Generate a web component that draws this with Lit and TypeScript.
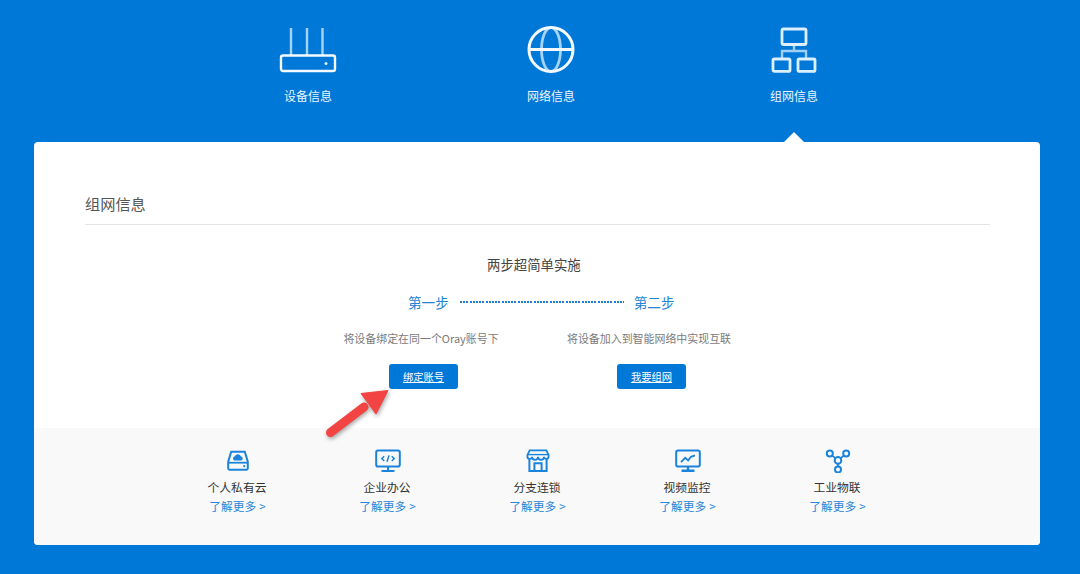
import { LitElement, html, css, svg } from "lit";
import { customElement } from "lit/decorators.js";

const B = "#1a84dc";

const icons = [
  svg`<path d="M6.200 2.800h13.600l3 9.800v6.600a1.600 1.600 0 0 1-1.600 1.600H4.800a1.600 1.600 0 0 1-1.600-1.600v-6.600z" fill="none" stroke="${B}" stroke-width="2"/>
      <path d="M3.500 13.700h19" stroke="${B}" stroke-width="1.800"/>
      <path d="M9.500 11.400a2.100 2.100 0 0 1 .4-4.100 3.200 3.200 0 0 1 6.100.3 1.950 1.950 0 0 1 .4 3.800z" fill="${B}"/>
      <circle cx="19.200" cy="17.200" r="1.100" fill="${B}"/>`,
  svg`<rect x="1.200" y="1.600" width="23.600" height="16" rx="1.800" fill="none" stroke="${B}" stroke-width="2"/>
      <path d="M13 17.600v3.800M6.500 22h13" stroke="${B}" stroke-width="2"/>
      <path d="M9.200 7.200 6.800 9.600l2.400 2.400M16.800 7.200l2.400 2.400-2.400 2.400M14 6.400l-2 6.400" fill="none" stroke="${B}" stroke-width="1.500"/>`,
  svg`<path d="M4.400 9.200V22h17.200V9.200" fill="none" stroke="${B}" stroke-width="2"/>
      <path d="M4.600 1.400h16.800l2.200 4.800v1.200a2.300 2.300 0 0 1-4.600.4 2.900 2.900 0 0 1-6 0 2.900 2.900 0 0 1-6 0 2.300 2.300 0 0 1-4.600-.4V6.200z" fill="none" stroke="${B}" stroke-width="1.800"/>
      <path d="M2.600 5.600h20.800" stroke="${B}" stroke-width="1.400"/>
      <path d="M9.400 22v-7.800h7.200V22" fill="none" stroke="${B}" stroke-width="2"/>`,
  svg`<rect x="1.200" y="1.600" width="23.600" height="16" rx="1.800" fill="none" stroke="${B}" stroke-width="2"/>
      <path d="M13 17.600v3.400M6.500 21.800h13" stroke="${B}" stroke-width="2.400"/>
      <path d="M6 13.200l4.200-4.400 3 2.600 2.800-3.600 4-1.400" fill="none" stroke="${B}" stroke-width="1.800"/>`,
  svg`<circle cx="4.800" cy="4.600" r="3" fill="none" stroke="${B}" stroke-width="2"/>
      <circle cx="21.200" cy="4.600" r="3" fill="none" stroke="${B}" stroke-width="2"/>
      <circle cx="13" cy="11.400" r="3.300" fill="none" stroke="${B}" stroke-width="2"/>
      <circle cx="13" cy="20.400" r="3" fill="none" stroke="${B}" stroke-width="2"/>
      <path d="M7 6.400l3.500 3M19 6.400l-3.500 3M13 14.700v2.700" stroke="${B}" stroke-width="1.800"/>`,
];

const solutions = ["个人私有云", "企业办公", "分支连锁", "视频监控", "工业物联"];

@customElement("app-root")
export class AppRoot extends LitElement {
  static styles = css`
    :host {
      display: block;
      width: 1080px;
      height: 574px;
      overflow: hidden;
      background: #0078d8;
      font-family: "Noto Sans CJK SC", "Liberation Sans", sans-serif;
    }
    a { color: inherit; }
    .nav {
      display: grid;
      grid-template-columns: repeat(3, 243px);
      justify-content: center;
      height: 142px;
      padding-left: 22px;
      box-sizing: border-box;
    }
    .nav-item {
      position: relative;
      display: flex;
      flex-direction: column;
      align-items: center;
      padding-top: 26px;
      color: #eaf5ff;
      font-size: 12px;
      line-height: 18px;
    }
    .nav-item svg { display: block; height: 47px; }
    .nav-label { margin-top: 14px; }
    .pip {
      position: absolute;
      left: 50%;
      bottom: 0;
      margin-left: -10px;
      width: 0;
      height: 0;
      border-left: 10px solid transparent;
      border-right: 10px solid transparent;
      border-bottom: 10px solid #fff;
    }
    .card {
      position: relative;
      margin-left: 34px;
      width: 1006px;
      height: 403px;
      background: #fff;
      border-radius: 4px;
      overflow: hidden;
    }
    .main { height: 286px; padding: 0 50px 0 51px; }
    .title {
      padding: 50px 0 9px;
      line-height: 23px;
      font-size: 15.200px;
      color: #555;
      border-bottom: 1px solid #e4e4e4;
    }
    .heading {
      margin: 29px 0 0 402px;
      font-size: 13.400px;
      line-height: 20px;
      color: #444;
      white-space: nowrap;
    }
    .stepline {
      display: flex;
      align-items: center;
      margin: 18px 0 0 323px;
      font-size: 13.600px;
      line-height: 20px;
      color: #2282d4;
    }
    .dots {
      width: 164px;
      height: 2px;
      margin: 0 10px 0 11px;
      background: repeating-linear-gradient(90deg, #1f80d6 0 2px, transparent 2px 3.200px);
    }
    .cols {
      display: grid;
      grid-template-columns: 228px 228px;
      margin: 16px 0 0 222px;
    }
    .col { display: flex; flex-direction: column; align-items: center; }
    .desc { font-size: 10.950px; line-height: 20px; color: #7b7b7b; white-space: nowrap; }
    .btn {
      display: block;
      width: 69px;
      height: 25px;
      margin: 16px 0 0 5px;
      border-radius: 3px;
      background: #0078d8;
      color: #fff;
      font-size: 10.300px;
      line-height: 25px;
      text-align: center;
    }
    .band {
      display: flex;
      justify-content: center;
      height: 117px;
      background: #f9f9f9;
    }
    .sol {
      width: 150px;
      display: flex;
      flex-direction: column;
      align-items: center;
      padding-top: 21px;
      box-sizing: border-box;
    }
    .sol svg { display: block; width: 26px; height: 24px; margin-left: 2px; }
    .sol-name { margin-top: 4px; font-size: 11.800px; line-height: 19px; color: #333; white-space: nowrap; }
    .sol-link {
      margin-left: 1px;
      font-size: 11.700px;
      word-spacing: 0.500px;
      line-height: 19px;
      color: #2a86d8;
      text-decoration: none;
      white-space: nowrap;
    }
    .arrow {
      position: absolute;
      left: 286px;
      top: 240px;
      width: 72px;
      height: 60px;
      filter: drop-shadow(1px 2px 2px rgba(0, 0, 0, 0.35));
    }
  `;

  render() {
    return html`
      <div class="nav">
        <div class="nav-item">
          <svg viewBox="0 0 58 47" width="58">
            <path d="M12 2v27M28 2v27M43.500 2v27" stroke="#a6d3f5" stroke-width="2.400"/>
            <rect x="2" y="29.500" width="54" height="15.500" rx="2" fill="none" stroke="#f4faff" stroke-width="2.400"/>
            <circle cx="47" cy="37.500" r="1.500" fill="#dceefc"/>
          </svg>
          <span class="nav-label">设备信息</span>
        </div>
        <div class="nav-item">
          <svg viewBox="0 0 48 47" width="48">
            <ellipse cx="24" cy="23.500" rx="9.500" ry="22" fill="none" stroke="#a6d3f5" stroke-width="2.800"/>
            <path d="M2 23.500h44" stroke="#f4faff" stroke-width="2.800"/>
            <circle cx="24" cy="23.500" r="22" fill="none" stroke="#f4faff" stroke-width="3"/>
          </svg>
          <span class="nav-label">网络信息</span>
        </div>
        <div class="nav-item">
          <svg viewBox="0 0 46 47" width="46">
            <path d="M23 18v7M11 33v-8h24v8" fill="none" stroke="#9fcff3" stroke-width="2.400"/>
            <rect x="11" y="3" width="24" height="15.500" rx="1.600" fill="none" stroke="#dcf0ff" stroke-width="2.800"/>
            <rect x="2" y="33" width="17" height="12.300" rx="1.400" fill="none" stroke="#dcf0ff" stroke-width="2.800"/>
            <rect x="27" y="33" width="17" height="12.300" rx="1.400" fill="none" stroke="#dcf0ff" stroke-width="2.800"/>
          </svg>
          <span class="nav-label">组网信息</span>
          <span class="pip"></span>
        </div>
      </div>
      <div class="card">
        <div class="main">
          <div class="title">组网信息</div>
          <div class="heading">两步超简单实施</div>
          <div class="stepline">
            <span>第一步</span><span class="dots"></span><span>第二步</span>
          </div>
          <div class="cols">
            <div class="col">
              <span class="desc">将设备绑定在同一个Oray账号下</span>
              <a class="btn" href="#">绑定账号</a>
            </div>
            <div class="col">
              <span class="desc">将设备加入到智能网络中实现互联</span>
              <a class="btn" href="#">我要组网</a>
            </div>
          </div>
        </div>
        <div class="band">
          ${solutions.map(
            (name, i) => html`
              <div class="sol">
                <svg viewBox="0 0 26 24">${icons[i]}</svg>
                <span class="sol-name">${name}</span>
                <a class="sol-link" href="#">了解更多 &gt;</a>
              </div>
            `
          )}
        </div>
        <svg class="arrow" viewBox="0 0 72 60">
          <path d="M10.500 50.500 44 25" stroke="#f34444" stroke-width="9" stroke-linecap="round"/>
          <path d="M68 8.500 41 11.500 56 32z" fill="#f34444" stroke="#f34444" stroke-linejoin="round"/>
        </svg>
      </div>
    `;
  }
}
